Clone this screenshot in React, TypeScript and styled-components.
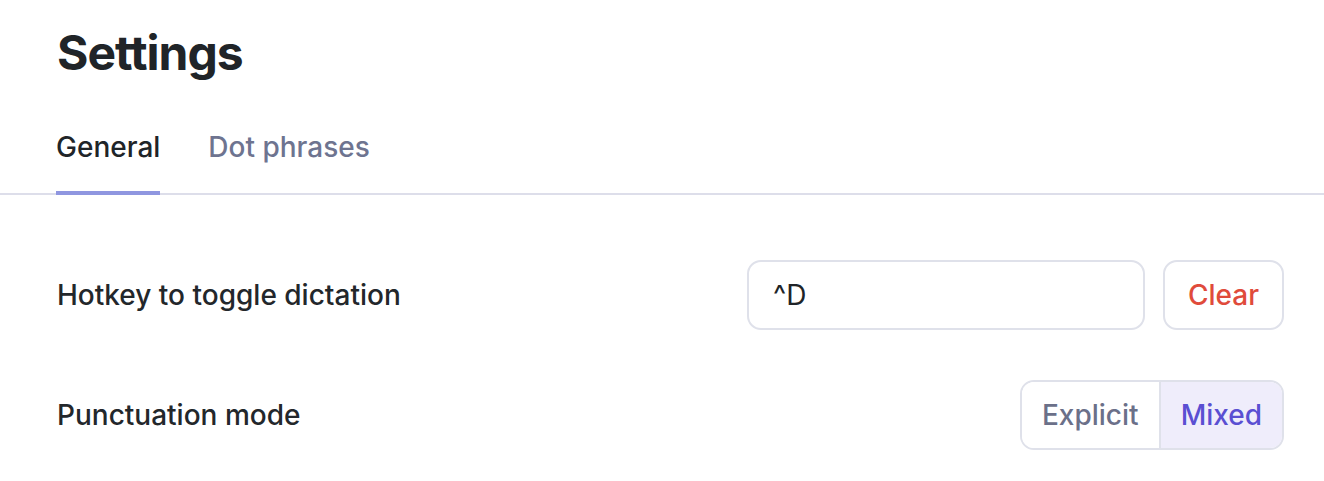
import React, { useState } from 'react'
import styled, { createGlobalStyle } from 'styled-components'

const GlobalStyle = createGlobalStyle`
  html, body {
    margin: 0;
    padding: 0;
    background: #ffffff;
  }
  body {
    font-family: Inter, "Noto Sans", sans-serif;
    color: #202428;
    -webkit-font-smoothing: antialiased;
  }
`

const Page = styled.div`
  width: 1324px;
  height: 481px;
  overflow: hidden;
  background: #fff;
`

const Header = styled.div`
  padding: 24px 40px 0 57px;
`

const Title = styled.h1`
  margin: 0;
  font-size: 48px;
  line-height: 58px;
  font-weight: 700;
  letter-spacing: -1px;
  color: #202428;
`

const TabBar = styled.div`
  display: flex;
  gap: 48px;
  margin-top: 48px;
  padding: 0 40px 0 56px;
  border-bottom: 2px solid #dddeea;
`

const Tab = styled.button<{ $active: boolean }>`
  position: relative;
  background: none;
  border: none;
  padding: 0 0 29px;
  margin: 0;
  font-family: inherit;
  font-size: 28px;
  line-height: 34px;
  font-weight: 500;
  color: ${p => (p.$active ? '#202428' : '#6e7490')};
  cursor: pointer;

  &::after {
    content: '';
    position: absolute;
    left: 0;
    right: 0;
    bottom: -2px;
    height: 4px;
    background: ${p => (p.$active ? '#8f96e0' : 'transparent')};
  }
`

const Body = styled.div`
  display: flex;
  flex-direction: column;
  gap: 50px;
  padding: 65px 40px 0 57px;
`

const Row = styled.div`
  display: flex;
  align-items: center;
  justify-content: space-between;
  height: 70px;
`

const Label = styled.span`
  font-size: 28px;
  font-weight: 500;
  color: #23272b;
`

const Controls = styled.div`
  display: flex;
  align-items: center;
  gap: 18px;
`

const HotkeyInput = styled.input`
  box-sizing: border-box;
  width: 398px;
  height: 70px;
  padding: 0 24px;
  border: 2px solid #dfe1ea;
  border-radius: 14px;
  font-family: inherit;
  font-size: 28px;
  color: #202428;
  outline: none;
  background: #fff;
`

const ClearButton = styled.button`
  box-sizing: border-box;
  height: 70px;
  width: 121px;
  padding: 0;
  border: 2px solid #dfe1ea;
  border-radius: 14px;
  background: #fff;
  font-family: inherit;
  font-size: 28px;
  font-weight: 500;
  color: #e04b3b;
  cursor: pointer;
`

const Segmented = styled.div`
  display: flex;
  height: 70px;
  box-sizing: border-box;
  border: 2px solid #dfe1ea;
  border-radius: 14px;
  overflow: hidden;
`

const Segment = styled.button<{ $active: boolean }>`
  border: none;
  margin: 0;
  padding: 0 20px;
  background: ${p => (p.$active ? '#efedfb' : '#fff')};
  font-family: inherit;
  font-size: 28px;
  font-weight: 500;
  color: ${p => (p.$active ? '#5a4fd2' : '#6b7089')};
  cursor: pointer;

  & + & {
    border-left: 2px solid #dfe1ea;
  }
`

export default function App() {
  const [tab, setTab] = useState('general')
  const [hotkey, setHotkey] = useState('^D')
  const [mode, setMode] = useState('mixed')

  return (
    <Page>
      <GlobalStyle />
      <Header>
        <Title>Settings</Title>
      </Header>
      <TabBar>
        <Tab $active={tab === 'general'} onClick={() => setTab('general')}>
          General
        </Tab>
        <Tab $active={tab === 'dot'} onClick={() => setTab('dot')}>
          Dot phrases
        </Tab>
      </TabBar>
      <Body>
        <Row>
          <Label>Hotkey to toggle dictation</Label>
          <Controls>
            <HotkeyInput value={hotkey} onChange={e => setHotkey(e.target.value)} />
            <ClearButton onClick={() => setHotkey('')}>Clear</ClearButton>
          </Controls>
        </Row>
        <Row>
          <Label>Punctuation mode</Label>
          <Segmented>
            <Segment $active={mode === 'explicit'} onClick={() => setMode('explicit')}>
              Explicit
            </Segment>
            <Segment $active={mode === 'mixed'} onClick={() => setMode('mixed')}>
              Mixed
            </Segment>
          </Segmented>
        </Row>
      </Body>
    </Page>
  )
}
